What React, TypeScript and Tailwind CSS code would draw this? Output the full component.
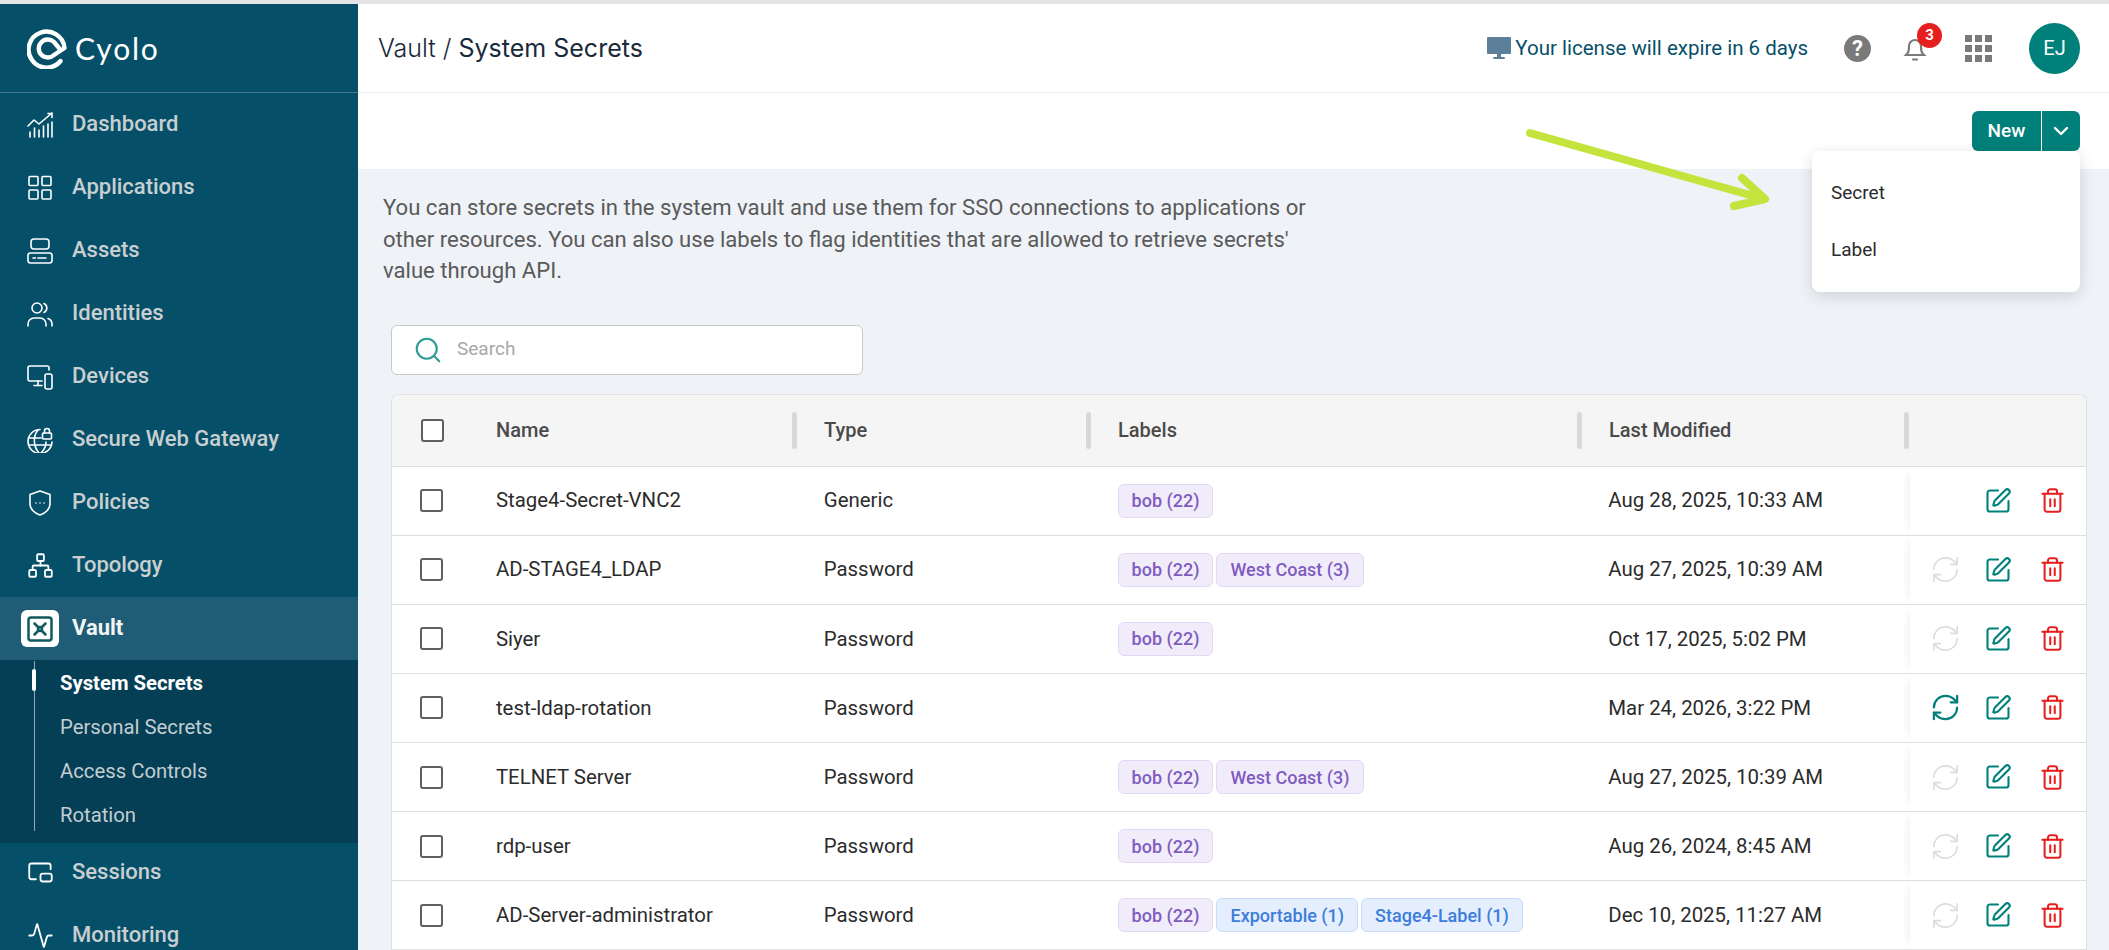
import React from "react";
import {Activity, ChevronDown, Network, PictureInPicture2, RefreshCw, Search, SquarePen, Trash2} from "lucide-react";

const ic = {width: 26, height: 26, viewBox: "0 0 26 26", fill: "none", stroke: "currentColor", strokeWidth: 1.6, strokeLinecap: "round", strokeLinejoin: "round"} as const;

const DashIcon = () => (
  <svg {...ic}>
    <path d="M1 14 L7 8 L12 12 L25 1" />
    <path d="M21 1.5h4v4" />
    <path d="M3 25v-5M7.5 25v-9M12 25v-7M16.5 25v-11M21 25v-13M25 25v-15" />
  </svg>
);
const AppsIcon = () => (
  <svg {...ic}>
    <rect x="2" y="1.5" width="9" height="9" rx="1" />
    <rect x="15" y="1.5" width="9" height="9" rx="1" />
    <rect x="2" y="15" width="9" height="9" rx="1" />
    <rect x="15" y="15" width="9" height="9" rx="1" />
  </svg>
);
const AssetIcon = () => (
  <svg {...ic}>
    <rect x="4" y="1" width="18" height="10" rx="3" />
    <rect x="1" y="15" width="24" height="10" rx="2.5" />
    <path d="M6 20h2.5M11 20h8" />
  </svg>
);
const UsersIcon = () => (
  <svg {...ic}>
    <circle cx="10" cy="7" r="5" />
    <path d="M1 25v-2a6 6 0 0 1 6-6h6a6 6 0 0 1 6 6v2" />
    <path d="M17 2.5a5 5 0 0 1 0 9" />
    <path d="M21 17.5a6 6 0 0 1 4 5.5v2" />
  </svg>
);
const DeviceIcon = () => (
  <svg {...ic}>
    <path d="M22 6V4a2 2 0 0 0-2-2H3a2 2 0 0 0-2 2v11a2 2 0 0 0 2 2h12" />
    <path d="M11 17v4M7 21.5h8" />
    <rect x="18" y="10" width="7" height="15" rx="2" />
  </svg>
);
const GlobeLockIcon = () => (
  <svg {...ic}>
    <path d="M13 2.5A12 12 0 1 0 25 15" />
    <path d="M11 3C6 9 6 19 12 26M14 26c3-3 5-6 5-11M2 11h12M2 18h22" />
    <rect x="15.5" y="6" width="9" height="6" rx="1" />
    <path d="M17.5 6V4a2.5 2.5 0 0 1 5 0v2" />
  </svg>
);
const ShieldIcon = () => (
  <svg {...ic}>
    <path d="M13 1 L23 4.5 V14 C23 19 18 23 13 25 C8 23 3 19 3 14 V4.5 Z" />
    <path d="M9 13h.01M13 13h.01M17 13h.01" />
  </svg>
);
const VaultIcon = () => (
  <svg width="26" height="26" viewBox="0 0 26 26" fill="none" stroke="#0f5a5e" strokeWidth="2.5" strokeLinecap="round">
    <rect x="1.5" y="1.5" width="23" height="23" rx="2.5" />
    <circle cx="13" cy="13" r="2" />
    <path d="M7.5 7.5l4 4M18.5 7.5l-4 4M7.5 18.5l4-4M18.5 18.5l-4-4" />
  </svg>
);

const items = [
  {name: "Dashboard", icon: <DashIcon />},
  {name: "Applications", icon: <AppsIcon />},
  {name: "Assets", icon: <AssetIcon />},
  {name: "Identities", icon: <UsersIcon />},
  {name: "Devices", icon: <DeviceIcon />},
  {name: "Secure Web Gateway", icon: <GlobeLockIcon />},
  {name: "Policies", icon: <ShieldIcon />},
  {name: "Topology", icon: <Network size={27} strokeWidth={1.6} />},
];

const NavItem = ({name, icon}: {name: string; icon: React.ReactNode}) => (
  <div className="flex h-[63px] shrink-0 items-center pl-[27px] text-[#c9cfd1]">
    <span className="flex w-[45px] text-white">{icon}</span>
    <span className="-mt-[3px] text-[22px] font-medium">{name}</span>
  </div>
);

const Logo = () => (
  <div className="flex h-[89px] shrink-0 items-center border-b border-[#3f7a8f] pl-[27px]">
    <svg width="41" height="41" viewBox="0 0 41 41" fill="none" stroke="#fff" strokeWidth="4.4" strokeLinecap="round" strokeLinejoin="round">
      <path d="M33.5 33A18 18 0 1 1 37.5 20L27 27A9 9 0 1 1 27 14L32 20" />
    </svg>
    <span className="ml-[7px] font-['Lato',sans-serif] text-[30px] tracking-[1.8px] text-white">Cyolo</span>
  </div>
);

const Sidebar = () => (
  <aside className="flex w-[358px] shrink-0 flex-col overflow-hidden bg-[#064f69]">
    <Logo />
    <div>
      {items.map((it) => (
        <NavItem key={it.name} name={it.name} icon={it.icon} />
      ))}
    </div>
    <div className="flex h-[63px] shrink-0 items-center bg-[#1f5c76] pl-[21px]">
      <span className="flex h-[37px] w-[38px] items-center justify-center rounded-[6px] bg-white">
        <VaultIcon />
      </span>
      <span className="-mt-[3px] ml-[13px] text-[22px] font-bold text-[#f2f4f5]">Vault</span>
    </div>
    <div className="h-[183px] shrink-0 bg-[#053f55] pt-[6px]">
      <div className="relative ml-[34px] h-[170px] border-l border-[#8fa8b3] pl-[25px]">
        <span className="absolute left-[-3px] top-[8px] h-[22px] w-[4px] rounded-full bg-white" />
        <div className="-mt-[5px]">
          <div className="flex h-[44px] items-center text-[20.3px] font-bold text-white">System Secrets</div>
          <div className="flex h-[44px] items-center text-[20.3px] text-[#c3cdd2]">Personal Secrets</div>
          <div className="flex h-[44px] items-center text-[20.3px] text-[#c3cdd2]">Access Controls</div>
          <div className="flex h-[44px] items-center text-[20.3px] text-[#c3cdd2]">Rotation</div>
        </div>
      </div>
    </div>
    <div className="-mt-[2px]">
      <NavItem name="Sessions" icon={<PictureInPicture2 size={27} strokeWidth={1.6} />} />
      <NavItem name="Monitoring" icon={<Activity size={27} strokeWidth={1.6} />} />
    </div>
  </aside>
);

const Header = () => (
  <header className="flex h-[89px] shrink-0 items-center justify-between border-b border-[#e6ebf5] bg-white pl-[20px] pr-[29px]">
    <div className="pt-[2px] font-['Inter',sans-serif] text-[25px] text-[#1a2a3a]">
      <span className="font-light">Vault / </span>
      <span>System Secrets</span>
    </div>
    <div className="flex items-center">
      <svg width="24" height="22" viewBox="0 0 24 22" fill="#5c7f9c">
        <rect x="0" y="0" width="24" height="17" rx="1" />
        <rect x="10" y="17" width="4" height="3" />
        <rect x="6" y="20" width="12" height="2" rx="1" />
      </svg>
      <span className="ml-[4px] text-[20.5px] text-[#064f69]">Your license will expire in 6 days</span>
      <span className="ml-[36px] flex h-[27px] w-[27px] items-center justify-center rounded-full bg-[#7a7a7a] text-[22px] font-bold text-white">?</span>
      <span className="relative ml-[31px] flex h-[27px] w-[26px] items-center justify-center text-[#7a7a7a]">
        <svg width="24" height="28" viewBox="0 0 24 28" fill="none" stroke="currentColor" strokeWidth="2.2" strokeLinecap="round">
          <path d="M3 21c2-2 3-3 3-9a6 6 0 0 1 12 0c0 6 1 7 3 9z" />
          <path d="M10 25.5h4" />
        </svg>
        <span className="absolute left-[15px] top-[-12px] flex h-[25px] w-[25px] items-center justify-center rounded-full bg-[#e61e1e] text-[15px] font-bold text-white">3</span>
      </span>
      <div className="ml-[37px] grid grid-cols-3 gap-[3px]">
        {[1, 2, 3, 4, 5, 6, 7, 8, 9].map((n) => (
          <span key={n} className="h-[7px] w-[7px] bg-[#7a7a7a]" />
        ))}
      </div>
      <span className="ml-[37px] flex h-[51px] w-[51px] items-center justify-center rounded-full bg-[#00807a] text-[20px] text-white">EJ</span>
    </div>
  </header>
);

const Tag = ({text, blue}: {text: string; blue?: boolean}) => (
  <span className={blue ? "flex h-[34px] items-center rounded-[6px] border border-[#c7dcfb] bg-[#e4eefd] px-[13px] text-[18px] font-medium text-[#3d7ddb]" : "flex h-[34px] items-center rounded-[6px] border border-[#e3d9f6] bg-[#f1ecfa] px-[13px] text-[18px] font-medium text-[#7f5cbf]"}>
    {text}
  </span>
);

const Check = () => <span className="block h-[23px] w-[23px] rounded-[3px] border-[2px] border-[#5f5f5f] bg-white" />;

type Row = {name: string; type: string; tags: [string, boolean?][]; date: string; rot: "" | "off" | "on"};

const bob: [string, boolean?] = ["bob (22)"];
const west: [string, boolean?] = ["West Coast (3)"];

const rows: Row[] = [
  {name: "Stage4-Secret-VNC2", type: "Generic", tags: [bob], date: "Aug 28, 2025, 10:33 AM", rot: ""},
  {name: "AD-STAGE4_LDAP", type: "Password", tags: [bob, west], date: "Aug 27, 2025, 10:39 AM", rot: "off"},
  {name: "Siyer", type: "Password", tags: [bob], date: "Oct 17, 2025, 5:02 PM", rot: "off"},
  {name: "test-ldap-rotation", type: "Password", tags: [], date: "Mar 24, 2026, 3:22 PM", rot: "on"},
  {name: "TELNET Server", type: "Password", tags: [bob, west], date: "Aug 27, 2025, 10:39 AM", rot: "off"},
  {name: "rdp-user", type: "Password", tags: [bob], date: "Aug 26, 2024, 8:45 AM", rot: "off"},
  {name: "AD-Server-administrator", type: "Password", tags: [bob, ["Exportable (1)", true], ["Stage4-Label (1)", true]], date: "Dec 10, 2025, 11:27 AM", rot: "off"},
];

const HeadCell = ({w, pr, children}: {w: string; pr: string; children: React.ReactNode}) => (
  <div className={`flex items-center justify-between ${w} ${pr}`}>
    <span>{children}</span>
    <span className="h-[37px] w-[5px] rounded-full bg-[#d8d8d8]" />
  </div>
);

const Table = () => (
  <div className="h-[600px] overflow-hidden rounded-t-[8px] border border-b-0 border-[#e0e0e0] bg-white">
    <div className="flex h-[72px] items-center border-b border-[#dedede] bg-[#f5f5f5] text-[20px] font-medium text-[#4a4a4a]">
      <div className="w-[104px] pl-[29px]"><Check /></div>
      <HeadCell w="w-[328px]" pr="pr-[27px]">Name</HeadCell>
      <HeadCell w="w-[294px]" pr="pr-[27px]">Type</HeadCell>
      <HeadCell w="w-[491px]" pr="pr-[27px]">Labels</HeadCell>
      <HeadCell w="w-[300px]" pr="pr-0">Last Modified</HeadCell>
    </div>
    {rows.map((r) => (
      <div key={r.name} className="flex h-[69.15px] items-center border-b border-[#dedede] text-[20.4px] text-[#2b2b2b]">
        <div className="w-[104px] pl-[28px]"><Check /></div>
        <div className="w-[328px]">{r.name}</div>
        <div className="w-[294px]">{r.type}</div>
        <div className="flex w-[491px] gap-[3px]">
          {r.tags.map((t) => (
            <Tag key={t[0]} text={t[0]} blue={t[1]} />
          ))}
        </div>
        <div className="w-[302px]">{r.date}</div>
        <div className="flex h-full w-[176px] items-center shadow-[-8px_0_8px_-6px_rgba(0,0,0,0.06)]">
          <span className="ml-[19px] flex w-[32px] justify-center">
            {r.rot === "off" && <RefreshCw size={31} strokeWidth={1.3} className="text-[#dcdcdc]" />}
            {r.rot === "on" && <RefreshCw size={31} strokeWidth={1.7} className="text-[#00807a]" />}
          </span>
          <span className="ml-[21px] flex w-[32px] justify-center">
            <SquarePen size={28} strokeWidth={1.8} className="text-[#00807a]" />
          </span>
          <span className="ml-[22px] flex w-[32px] justify-center">
            <Trash2 size={27} strokeWidth={1.8} className="text-[#e61e1e]" />
          </span>
        </div>
      </div>
    ))}
  </div>
);

export default function App() {
  return (
    <div className="relative h-[950px] overflow-hidden bg-white font-['Roboto',sans-serif]">
      <div className="h-[4px] bg-[#e3e3e3]" />
      <div className="flex h-[946px]">
        <Sidebar />
        <main className="flex min-w-0 flex-1 flex-col">
          <Header />
          <div className="flex h-[76px] shrink-0 items-start justify-end bg-white pr-[29px] pt-[18px]">
            <div className="flex h-[40px] w-[108px] overflow-hidden rounded-[6px] bg-[#00807a] text-white">
              <span className="flex w-[70px] items-center justify-center border-r border-white text-[19px] font-medium">New</span>
              <span className="flex flex-1 items-center justify-center"><ChevronDown size={24} strokeWidth={2.4} /></span>
            </div>
          </div>
          <div className="flex-1 bg-[#eff2f7] pl-[25px] pr-[22px] pt-[23px]">
            <p className="w-[945px] text-[22.1px] leading-[31.5px] text-[#5a5a5a]">
              You can store secrets in the system vault and use them for SSO connections to applications or other resources. You can also use labels to flag identities that are allowed to retrieve secrets' value through API.
            </p>
            <div className="ml-[8px] mt-[38px] flex h-[50px] w-[472px] items-center rounded-[6px] border border-[#c9c9c9] bg-white pl-[21px]">
              <Search size={30} strokeWidth={1.7} className="text-[#2f9c96]" />
              <span className="ml-[14px] text-[19px] text-[#a8a8a8]">Search</span>
            </div>
            <div className="ml-[8px] mt-[19px]">
              <Table />
            </div>
          </div>
        </main>
      </div>

      {/* dropdown and annotation arrow sit over the page */}
      <div className="absolute left-[1812px] top-[151px] z-10 flex h-[141px] w-[268px] flex-col justify-center gap-[25px] rounded-[8px] bg-white pl-[19px] text-[19px] text-[#2b2b2b] shadow-[0_4px_16px_rgba(0,0,0,0.14)]">
        <div className="leading-[32px]">Secret</div>
        <div className="leading-[32px]">Label</div>
      </div>
      <svg className="absolute left-[1520px] top-[125px] z-20" width="260" height="90" viewBox="0 0 260 90" fill="none" stroke="#c4e33c" strokeWidth="8" strokeLinecap="round" strokeLinejoin="round">
        <path d="M10 8 L244 74" />
        <path d="M222 53 L245 74 L214 81" />
      </svg>
    </div>
  );
}
